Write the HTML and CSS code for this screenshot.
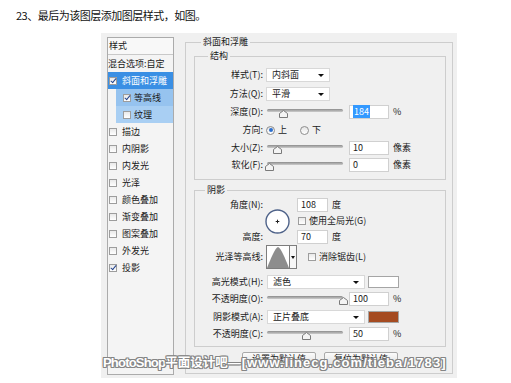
FILE: index.html
```html
<!DOCTYPE html>
<html lang="zh-CN">
<head>
  <meta charset="UTF-8">
  <title>图层样式</title>
  <link rel="stylesheet" href="styles.css">
</head>
<body>
  <p class="step">23、最后为该图层添加图层样式，如图。</p>

  <div class="dialog">
    <div class="styles-list">
      <div class="list-head">样式</div>
      <div class="item plain">混合选项:自定</div>
      <div class="item sel"><span class="chk on"></span>斜面和浮雕</div>
      <div class="item sub sub-sel"><span class="chk on"></span>等高线</div>
      <div class="item sub sub-sel light"><span class="chk"></span>纹理</div>
      <div class="item"><span class="chk"></span>描边</div>
      <div class="item"><span class="chk"></span>内阴影</div>
      <div class="item"><span class="chk"></span>内发光</div>
      <div class="item"><span class="chk"></span>光泽</div>
      <div class="item"><span class="chk"></span>颜色叠加</div>
      <div class="item"><span class="chk"></span>渐变叠加</div>
      <div class="item"><span class="chk"></span>图案叠加</div>
      <div class="item"><span class="chk"></span>外发光</div>
      <div class="item"><span class="chk on"></span>投影</div>
    </div>

    <fieldset class="group main">
      <legend class="lg-main">斜面和浮雕</legend>

      <fieldset class="group inner struct">
        <legend class="lg-struct">结构</legend>
        <div class="row h19">
          <span class="lbl">样式(T):</span>
          <div class="select w64">内斜面</div>
        </div>
        <div class="row h19">
          <span class="lbl">方法(Q):</span>
          <div class="select w64">平滑</div>
        </div>
        <div class="row">
          <span class="lbl">深度(D):</span>
          <div class="slider"><div class="track"></div><svg class="thumb" style="left: 16px" width="9" height="8" viewBox="0 0 9 8"><polygon points="0.5,7.5 0.5,3.5 4.5,0.5 8.5,3.5 8.5,7.5" fill="#f4f4f4" stroke="#7a7a7a"/></svg></div>
          <div class="field"><span class="picked">184</span></div>
          <span class="unit">%</span>
        </div>
        <div class="row">
          <span class="lbl">方向:</span>
          <span class="radio on"></span><span class="opt">上</span>
          <span class="radio second"></span><span class="opt">下</span>
        </div>
        <div class="row h17">
          <span class="lbl">大小(Z):</span>
          <div class="slider"><div class="track"></div><svg class="thumb" style="left: 10px" width="9" height="8" viewBox="0 0 9 8"><polygon points="0.5,7.5 0.5,3.5 4.5,0.5 8.5,3.5 8.5,7.5" fill="#f4f4f4" stroke="#7a7a7a"/></svg></div>
          <div class="field">10</div>
          <span class="unit">像素</span>
        </div>
        <div class="row h17">
          <span class="lbl">软化(F):</span>
          <div class="slider"><div class="track"></div><svg class="thumb" style="left: 2px" width="9" height="8" viewBox="0 0 9 8"><polygon points="0.5,7.5 0.5,3.5 4.5,0.5 8.5,3.5 8.5,7.5" fill="#f4f4f4" stroke="#7a7a7a"/></svg></div>
          <div class="field">0</div>
          <span class="unit">像素</span>
        </div>
      </fieldset>

      <fieldset class="group inner shadow">
        <legend class="lg-shadow">阴影</legend>
        <div class="angle">
          <span class="lbl">角度(N):</span>
          <svg class="dial" width="25" height="25" viewBox="0 0 25 25">
            <circle cx="12.5" cy="12.5" r="11.5" fill="#fff" stroke="#4e6289" stroke-width="1.4"/>
            <path d="M12.5 10.7v3.6M10.7 12.5h3.6" stroke="#222" stroke-width="1"/>
          </svg>
          <div class="cell"><div class="field small">108</div><span class="unit">度</span></div>
          <div class="cell mid"><span class="chk"></span><span class="opt">使用全局光(G)</span></div>
          <span class="lbl">高度:</span>
          <div class="cell"><div class="field small">70</div><span class="unit">度</span></div>
        </div>
        <div class="row h24">
          <span class="lbl">光泽等高线:</span>
          <div class="contour">
            <svg width="22" height="22" viewBox="0 0 22 22"><path d="M0 22 C4 12 8 2 11 1 C14 2 18 12 22 22 Z" fill="#8d8d8d"/></svg>
          </div>
          <div class="contour-arrow"></div>
          <span class="chk gap"></span><span class="opt">消除锯齿(L)</span>
        </div>
        <div class="row">
          <span class="lbl">高光模式(H):</span>
          <div class="select w98 mode">滤色</div>
          <div class="swatch"></div>
        </div>
        <div class="row h16">
          <span class="lbl">不透明度(O):</span>
          <div class="slider"><div class="track"></div><svg class="thumb" style="left: 76px" width="9" height="8" viewBox="0 0 9 8"><polygon points="0.5,7.5 0.5,3.5 4.5,0.5 8.5,3.5 8.5,7.5" fill="#f4f4f4" stroke="#7a7a7a"/></svg></div>
          <div class="field">100</div>
          <span class="unit">%</span>
        </div>
        <div class="row h19">
          <span class="lbl">阴影模式(A):</span>
          <div class="select w98 mode">正片叠底</div>
          <div class="swatch brown"></div>
        </div>
        <div class="row h16">
          <span class="lbl">不透明度(C):</span>
          <div class="slider"><div class="track"></div><svg class="thumb" style="left: 39px" width="9" height="8" viewBox="0 0 9 8"><polygon points="0.5,7.5 0.5,3.5 4.5,0.5 8.5,3.5 8.5,7.5" fill="#f4f4f4" stroke="#7a7a7a"/></svg></div>
          <div class="field">50</div>
          <span class="unit">%</span>
        </div>
      </fieldset>

      <div class="buttons">
        <button>设置为默认值</button>
        <button>复位为默认值</button>
      </div>
    </fieldset>

    <div class="watermark"><span class="wm-a">PhotoShop</span><span class="wm-b">平面设计吧</span><span class="wm-c">—[www.linecg.com/tieba/1783]</span></div>
  </div>
</body>
</html>
```

FILE: styles.css
```css
body {
  margin: 0;
  background: #fff;
  color: #222;
  font-family: "Noto Sans CJK SC", sans-serif;
}

.step {
  margin: 0;
  height: 33px;
  box-sizing: border-box;
  padding: 7px 0 0 16px;
  font-size: 11px;
  line-height: 16px;
  letter-spacing: -0.5px;
  color: #111;
}

.dialog {
  position: relative;
  display: flex;
  align-items: flex-start;
  margin-left: 101px;
  width: 356px;
  height: 345px;
  box-sizing: border-box;
  padding-left: 6px;
  background: #f0f0f0;
  font-size: 9px;
  line-height: 12px;
  color: #1a1a1a;
}

/* left list */
.styles-list {
  width: 67px;
  height: 338px;
  margin-top: 4px;
  box-sizing: border-box;
  border: 1px solid #ababab;
  background: #f4f4f4;
  flex: none;
}

.list-head {
  height: 16px;
  line-height: 16px;
  padding-left: 1px;
  border-bottom: 1px solid #c9c9c9;
  background: #f8f8f8;
}

.item {
  display: flex;
  align-items: center;
  height: 17px;
  padding-left: 1px;
  white-space: nowrap;
}

.item .chk {
  margin-right: 5px;
}

.item.plain {
  padding-left: 0;
}

.item.sel {
  background: #3a8fe4;
  color: #fff;
}

.item.sub {
  margin-left: 8px;
  padding-left: 7px;
}

.item.sub .chk {
  margin-right: 3px;
}

.item.sub-sel {
  background: #96c3ef;
}

.item.sub-sel.light {
  background: #a9cff3;
}

.chk {
  position: relative;
  width: 8px;
  height: 8px;
  box-sizing: border-box;
  border: 1px solid #9d9d9d;
  background: linear-gradient(#e9e9e9, #fff);
  flex: none;
}

.chk.on::after {
  content: "";
  position: absolute;
  left: 1.5px;
  top: -1px;
  width: 2px;
  height: 5px;
  border: solid #24458e;
  border-width: 0 1.4px 1.4px 0;
  transform: rotate(40deg);
}

/* group boxes */
.group {
  margin: 0;
  border: 1px solid #cdcdcd;
  min-width: 0;
}

.group legend {
  padding: 0 2px;
  line-height: 14px;
  font-size: 9px;
}

.main {
  width: 268px;
  box-sizing: border-box;
  margin: 2px 0 0 11px;
  padding: 0 6px 8px 8px;
}

.lg-main { margin-left: 7px; }
.lg-struct { margin-left: 13px; }
.lg-shadow { margin-left: 10px; }

.inner {
  padding: 2px 0 6px 0;
}

.shadow {
  margin-top: 3px;
  padding: 1px 0 4px 0;
}

/* rows */
.row {
  display: flex;
  align-items: center;
  height: 18px;
  white-space: nowrap;
}

.row.h19 { height: 19px; }
.row.h17 { height: 17px; }
.row.h16 { height: 16px; }
.row.h24 { height: 24px; margin-top: 1px; margin-bottom: 4px; }

.lbl {
  width: 68px;
  flex: none;
  text-align: right;
  white-space: nowrap;
}

.select {
  position: relative;
  height: 14px;
  margin-left: 3px;
  box-sizing: border-box;
  padding-left: 5px;
  border: 1px solid #d8d8d8;
  background: #fff;
  line-height: 12px;
}

.select::after {
  content: "";
  position: absolute;
  right: 5px;
  top: 5px;
  border-left: 3px solid transparent;
  border-right: 3px solid transparent;
  border-top: 3px solid #111;
}

.select.w64 { width: 64px; }
.select.w98 { width: 98px; }
.select.mode { margin-left: 4px; }

.slider {
  position: relative;
  width: 76px;
  height: 12px;
  margin-left: 4px;
  flex: none;
}

.track {
  position: absolute;
  left: 0;
  right: 0;
  top: 3px;
  height: 3px;
  border-radius: 2px;
  background: linear-gradient(#8c8c8c, #cdcdcd);
}

.thumb {
  position: absolute;
  top: 4px;
  margin-left: -4.5px;
}

.field {
  width: 40px;
  height: 14px;
  margin-left: 6px;
  box-sizing: border-box;
  padding-left: 3px;
  border: 1px solid #d0d0d0;
  background: #fff;
  line-height: 12px;
  flex: none;
}

.field.small {
  width: 31px;
  margin-left: 0;
}

.picked {
  background: #3399ff;
  color: #fff;
  padding: 0 1px;
}

.unit {
  margin-left: 4px;
}

.radio {
  position: relative;
  width: 9px;
  height: 9px;
  margin-left: 3px;
  box-sizing: border-box;
  border: 1px solid #8d8d8d;
  border-radius: 50%;
  background: linear-gradient(#e4e4e4, #fff);
  flex: none;
}

.radio.on::after {
  content: "";
  position: absolute;
  left: 1.5px;
  top: 1.5px;
  width: 4px;
  height: 4px;
  border-radius: 50%;
  background: #2c6fcf;
}

.radio.second {
  margin-left: 13px;
}

.opt {
  margin-left: 3px;
}

/* angle block */
.angle {
  display: grid;
  grid-template-columns: 68px 34px auto;
  grid-template-rows: 14px 18px 14px;
  align-items: center;
  white-space: nowrap;
}

.angle .lbl:first-child { grid-row: 1; grid-column: 1; }
.angle .lbl:nth-of-type(2) { grid-row: 3; grid-column: 1; }

.dial {
  grid-row: 1 / 4;
  grid-column: 2;
  margin-left: 2px;
}

.cell {
  display: flex;
  align-items: center;
  grid-column: 3;
}

.cell.mid .chk {
  margin-left: 1px;
}

.contour {
  width: 24px;
  height: 24px;
  margin-left: 3px;
  box-sizing: border-box;
  border: 1px solid #7d7d7d;
  background: #fff;
  flex: none;
}

.contour svg {
  display: block;
}

.contour-arrow {
  position: relative;
  width: 7px;
  height: 24px;
  box-sizing: border-box;
  border: 1px solid #7d7d7d;
  border-left: none;
  background: #f7f7f7;
  flex: none;
}

.contour-arrow::after {
  content: "";
  position: absolute;
  left: 1px;
  top: 10px;
  border-left: 2px solid transparent;
  border-right: 2px solid transparent;
  border-top: 3px solid #111;
}

.chk.gap {
  margin-left: 11px;
}

.swatch {
  width: 31px;
  height: 12px;
  margin-left: 3px;
  box-sizing: border-box;
  border: 1px solid #a5a5a5;
  background: #fff;
  flex: none;
}

.swatch.brown {
  background: #a54b21;
}

.buttons {
  display: flex;
  justify-content: center;
  gap: 8px;
  margin-top: 5px;
}

.buttons button {
  width: 74px;
  height: 13px;
  padding: 0;
  border: 1px solid #a9a9a9;
  border-radius: 2px;
  background: linear-gradient(#fbfbfb, #e2e2e2);
  color: #222;
  font-family: "Noto Sans CJK SC", sans-serif;
  font-size: 9px;
  line-height: 11px;
}

.watermark {
  position: absolute;
  left: 2px;
  top: 323px;
  white-space: nowrap;
  font-family: "Liberation Sans", "Noto Sans CJK SC", sans-serif;
  font-weight: bold;
  font-size: 13px;
  line-height: 14px;
  color: #fff;
  text-shadow: 1px 0 #858585, -1px 0 #858585, 0 1px #858585, 0 -1px #858585,
    1px 1px #858585, -1px -1px #858585, 1px -1px #858585, -1px 1px #858585;
}

.wm-a { letter-spacing: -0.8px; }
.wm-b { font-size: 12.5px; }
.wm-c { letter-spacing: 1.05px; }
```
